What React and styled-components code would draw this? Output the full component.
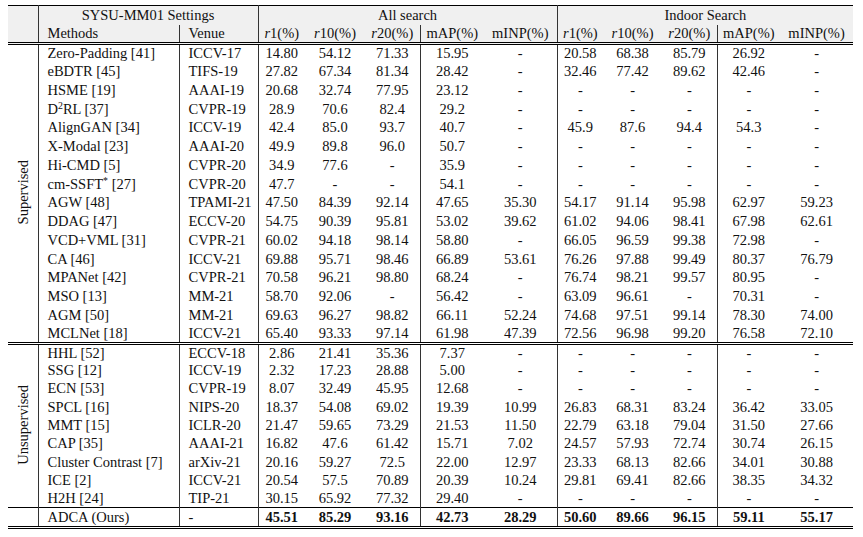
import React from 'react';
import styled, { createGlobalStyle } from 'styled-components';

const GlobalStyle = createGlobalStyle`
  html, body {
    margin: 0;
    padding: 0;
    background: #fff;
  }
  body {
    font-family: "Liberation Serif", "Times New Roman", serif;
    color: #111;
  }
`;

const Page = styled.div`
    padding: 5px 10px 0 8px;
`;

const Table = styled.table`
    width: 845px;
    border-collapse: collapse;
    table-layout: fixed;
    font-size: 14.5px;
    line-height: 1;
    border-top: 1px solid #000;
    border-bottom: 3px double #000;
`;

const Row = styled.tr`
    height: ${p => p.$height || 18.3}px;
    border-bottom: ${p => p.$rule === 'double' ? '3px double #000' : p.$rule === 'single' ? '1px solid #000' : 'none'};
`;

const HeadCell = styled.th`
    background: #f0f0f0;
    font-weight: normal;
    text-align: ${p => p.$align || 'center'};
    padding: ${p => p.$align === 'left' ? '0 0 0 9px' : '0'};
    white-space: nowrap;
    vertical-align: middle;
    border-right: ${p => p.$line ? '1px solid #333' : 'none'};
`;

const Cell = styled.td`
    text-align: ${p => p.$align || 'center'};
    padding: ${p => p.$align === 'left' ? '0 0 0 9px' : '0'};
    white-space: nowrap;
    vertical-align: middle;
    font-weight: ${p => p.$bold ? 'bold' : 'normal'};
    border-right: ${p => p.$line ? '1px solid #333' : 'none'};
`;

const GroupCell = styled.td`
    padding: 0;
    text-align: center;
    vertical-align: middle;
    border-right: 1px solid #333;
`;

const GroupLabel = styled.span`
    display: inline-block;
    writing-mode: vertical-rl;
    transform: rotate(180deg);
    white-space: nowrap;
`;

const Var = styled.i`
    font-style: italic;
`;

const Sup = styled.sup`
    font-size: 0.68em;
    line-height: 0;
    vertical-align: 0.55em;
`;

const supervised = [
    ['Zero-Padding [41]', 'ICCV-17', '14.80 54.12 71.33 15.95 - 20.58 68.38 85.79 26.92 -'],
    ['eBDTR [45]', 'TIFS-19', '27.82 67.34 81.34 28.42 - 32.46 77.42 89.62 42.46 -'],
    ['HSME [19]', 'AAAI-19', '20.68 32.74 77.95 23.12 - - - - - -'],
    [<>D<Sup>2</Sup>RL [37]</>, 'CVPR-19', '28.9 70.6 82.4 29.2 - - - - - -'],
    ['AlignGAN [34]', 'ICCV-19', '42.4 85.0 93.7 40.7 - 45.9 87.6 94.4 54.3 -'],
    ['X-Modal [23]', 'AAAI-20', '49.9 89.8 96.0 50.7 - - - - - -'],
    ['Hi-CMD [5]', 'CVPR-20', '34.9 77.6 - 35.9 - - - - - -'],
    [<>cm-SSFT<Sup>*</Sup> [27]</>, 'CVPR-20', '47.7 - - 54.1 - - - - - -'],
    ['AGW [48]', 'TPAMI-21', '47.50 84.39 92.14 47.65 35.30 54.17 91.14 95.98 62.97 59.23'],
    ['DDAG [47]', 'ECCV-20', '54.75 90.39 95.81 53.02 39.62 61.02 94.06 98.41 67.98 62.61'],
    ['VCD+VML [31]', 'CVPR-21', '60.02 94.18 98.14 58.80 - 66.05 96.59 99.38 72.98 -'],
    ['CA [46]', 'ICCV-21', '69.88 95.71 98.46 66.89 53.61 76.26 97.88 99.49 80.37 76.79'],
    ['MPANet [42]', 'CVPR-21', '70.58 96.21 98.80 68.24 - 76.74 98.21 99.57 80.95 -'],
    ['MSO [13]', 'MM-21', '58.70 92.06 - 56.42 - 63.09 96.61 - 70.31 -'],
    ['AGM [50]', 'MM-21', '69.63 96.27 98.82 66.11 52.24 74.68 97.51 99.14 78.30 74.00'],
    ['MCLNet [18]', 'ICCV-21', '65.40 93.33 97.14 61.98 47.39 72.56 96.98 99.20 76.58 72.10'],
];

const unsupervised = [
    ['HHL [52]', 'ECCV-18', '2.86 21.41 35.36 7.37 - - - - - -'],
    ['SSG [12]', 'ICCV-19', '2.32 17.23 28.88 5.00 - - - - - -'],
    ['ECN [53]', 'CVPR-19', '8.07 32.49 45.95 12.68 - - - - - -'],
    ['SPCL [16]', 'NIPS-20', '18.37 54.08 69.02 19.39 10.99 26.83 68.31 83.24 36.42 33.05'],
    ['MMT [15]', 'ICLR-20', '21.47 59.65 73.29 21.53 11.50 22.79 63.18 79.04 31.50 27.66'],
    ['CAP [35]', 'AAAI-21', '16.82 47.6 61.42 15.71 7.02 24.57 57.93 72.74 30.74 26.15'],
    ['Cluster Contrast [7]', 'arXiv-21', '20.16 59.27 72.5 22.00 12.97 23.33 68.13 82.66 34.01 30.88'],
    ['ICE [2]', 'ICCV-21', '20.54 57.5 70.89 20.39 10.24 29.81 69.41 82.66 38.35 34.32'],
    ['H2H [24]', 'TIP-21', '30.15 65.92 77.32 29.40 - - - - - -'],
];

const ours = ['ADCA (Ours)', '-', '45.51 85.29 93.16 42.73 28.29 50.60 89.66 96.15 59.11 55.17'];

// vertical rules sit after r20 / mINP / r20
const ruleAfter = [2, 4, 7];
const widths = [30, 141, 79, 47, 60, 55, 64, 73, 46, 59, 55, 63, 73];

const MetricHead = ({ name, line }) => (
    <HeadCell $line={line}>
        {name.startsWith('r') ? <><Var>r</Var>{name.slice(1)}</> : name}(%)
    </HeadCell>
);

const DataRow = ({ row, label, rule, bold, height }) => {
    const [method, venue, values] = row;
    return (
        <Row $rule={rule} $height={height}>
            {label}
            <Cell $align="left" $line>{method}</Cell>
            <Cell $align="left" $line>{venue}</Cell>
            {values.split(' ').map((v, i) => (
                <Cell key={i} $line={ruleAfter.includes(i)} $bold={bold}>{v}</Cell>
            ))}
        </Row>
    );
};

const App = () => {
    return (
        <>
            <GlobalStyle />
            <Page>
                <Table>
                    <colgroup>
                        {widths.map((w, i) => <col key={i} style={{ width: w }} />)}
                    </colgroup>
                    <thead>
                        <Row $height={19}>
                            <HeadCell rowSpan={2} $line />
                            <HeadCell colSpan={2} $line>SYSU-MM01 Settings</HeadCell>
                            <HeadCell colSpan={5} $line>All search</HeadCell>
                            <HeadCell colSpan={5}>Indoor Search</HeadCell>
                        </Row>
                        <Row $height={19} $rule="double">
                            <HeadCell $align="left" $line>Methods</HeadCell>
                            <HeadCell $align="left" $line>Venue</HeadCell>
                            <MetricHead name="r1" />
                            <MetricHead name="r10" />
                            <MetricHead name="r20" line />
                            <MetricHead name="mAP" />
                            <MetricHead name="mINP" line />
                            <MetricHead name="r1" />
                            <MetricHead name="r10" />
                            <MetricHead name="r20" line />
                            <MetricHead name="mAP" />
                            <MetricHead name="mINP" />
                        </Row>
                    </thead>
                    <tbody>
                        {supervised.map((row, i) => (
                            <DataRow
                                key={i}
                                row={row}
                                height={18.72}
                                rule={i === supervised.length - 1 ? 'double' : null}
                                label={i === 0 && (
                                    <GroupCell rowSpan={supervised.length}>
                                        <GroupLabel>Supervised</GroupLabel>
                                    </GroupCell>
                                )}
                            />
                        ))}
                        {unsupervised.map((row, i) => (
                            <DataRow
                                key={i}
                                row={row}
                                height={18.3}
                                rule={i === unsupervised.length - 1 ? 'single' : null}
                                label={i === 0 && (
                                    <GroupCell rowSpan={unsupervised.length}>
                                        <GroupLabel>Unsupervised</GroupLabel>
                                    </GroupCell>
                                )}
                            />
                        ))}
                        <DataRow row={ours} bold height={20} label={<GroupCell />} />
                    </tbody>
                </Table>
            </Page>
        </>
    );
};

export default App;
